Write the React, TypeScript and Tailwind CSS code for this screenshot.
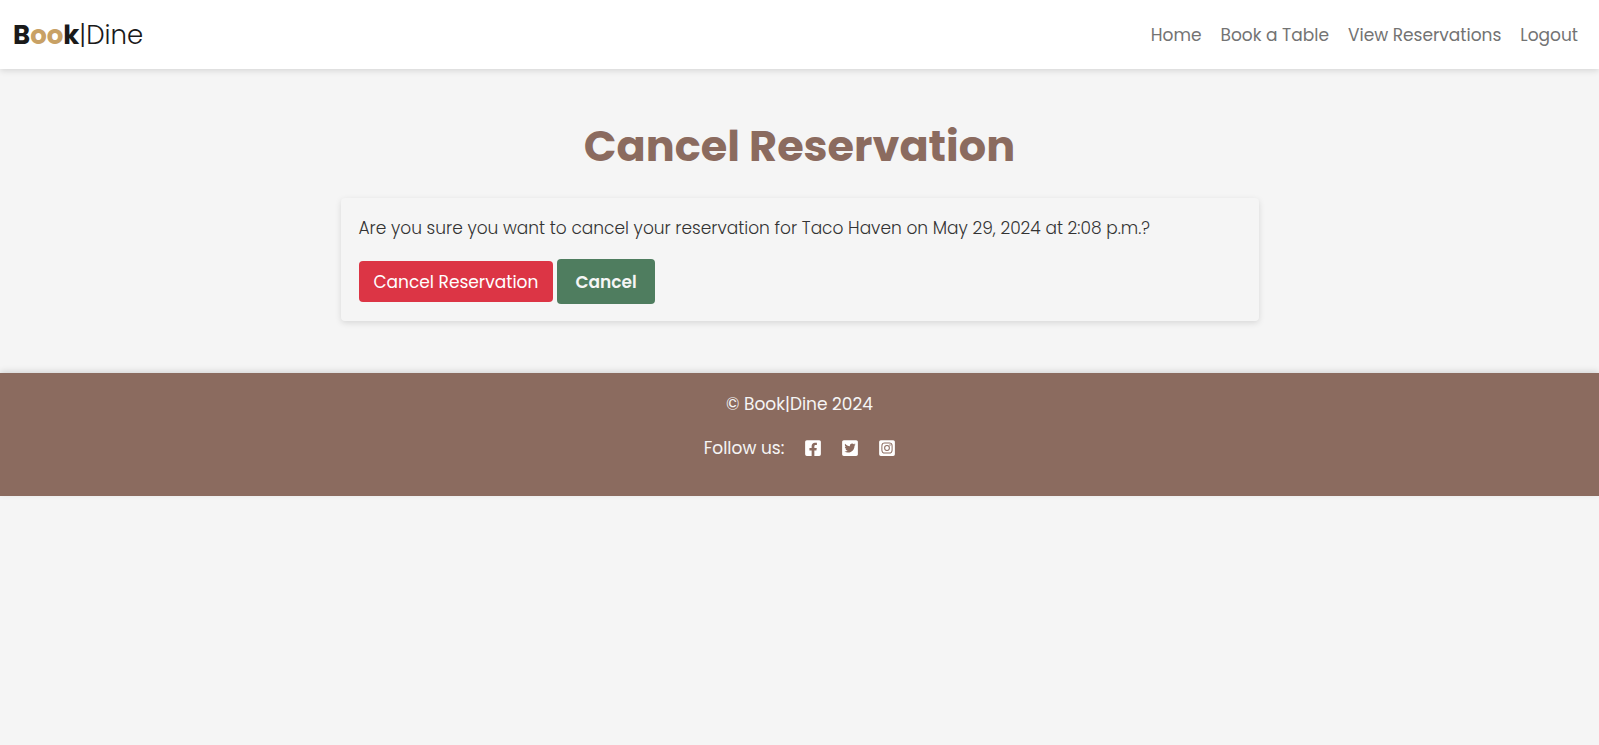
import { FaFacebookSquare, FaTwitterSquare, FaInstagramSquare } from "react-icons/fa";

const navLinks = ["Home", "Book a Table", "View Reservations", "Logout"];

const socialLinks = [
  { label: "Facebook", Icon: FaFacebookSquare },
  { label: "Twitter", Icon: FaTwitterSquare },
  { label: "Instagram", Icon: FaInstagramSquare },
];

function Header() {
  return (
    <header className="relative flex items-center justify-between bg-white px-[13px] pt-[17px] pb-[15px] shadow-[0_2px_6px_rgba(0,0,0,0.12)]">
      <a href="#" className="text-[26px] leading-[37px] font-light text-[#1a1a1a]">
        <span className="font-bold">
          B<span className="text-[#c8a165]">oo</span>k
        </span>
        |Dine
      </a>
      <nav className="flex gap-[19px] pr-2">
        {navLinks.map((name) => (
          <a key={name} href="#" className="text-[17px] leading-[27px] text-[#737373]">
            {name}
          </a>
        ))}
      </nav>
    </header>
  );
}

function CancelCard() {
  return (
    <section className="rounded bg-[#f5f5f5] px-[18px] py-[17px] shadow-[0_2px_6px_rgba(0,0,0,0.12)]">
      <p className="mb-[18px] text-[17px] leading-[26px] font-light text-[#333333]">
        Are you sure you want to cancel your reservation for Taco Haven on May 29, 2024 at 2:08 p.m.?
      </p>
      <form className="flex items-center gap-1">
        <button
          type="button"
          className="rounded bg-[#dc3545] px-[15px] pt-2 pb-[6px] text-[17px] leading-[27px] text-white"
        >
          Cancel Reservation
        </button>
        <a
          href="#"
          className="rounded bg-[#4f7d5f] px-[18px] pt-[10px] pb-2 text-[17px] leading-[27px] font-semibold text-[#f5f5f5]"
        >
          Cancel
        </a>
      </form>
    </section>
  );
}

function Footer() {
  return (
    <footer className="bg-[#8b6b5f] pt-[18px] pb-[34px] text-center text-[17px] leading-[27px] text-[#f5f5f5] shadow-[0_-2px_6px_rgba(0,0,0,0.12)]">
      <p className="mb-[17px]">© Book|Dine 2024</p>
      <div className="flex items-center justify-center gap-[21px]">
        <span>Follow us:</span>
        {socialLinks.map(({ label, Icon }) => (
          <a key={label} href="#" aria-label={label} className="mb-0.5 flex text-white">
            <Icon className="h-[18px] w-4" />
          </a>
        ))}
      </div>
    </footer>
  );
}

export default function App() {
  return (
    <div className="min-h-screen bg-[#f5f5f5] font-['Poppins','Inter',sans-serif]">
      <Header />
      <main className="mx-auto max-w-[954px] px-[18px] pt-[50px] pb-[52px]">
        <h1 className="mb-[25px] text-center text-[43px] leading-[54px] font-bold text-[#8b6b5f]">
          Cancel Reservation
        </h1>
        <CancelCard />
      </main>
      <Footer />
    </div>
  );
}
